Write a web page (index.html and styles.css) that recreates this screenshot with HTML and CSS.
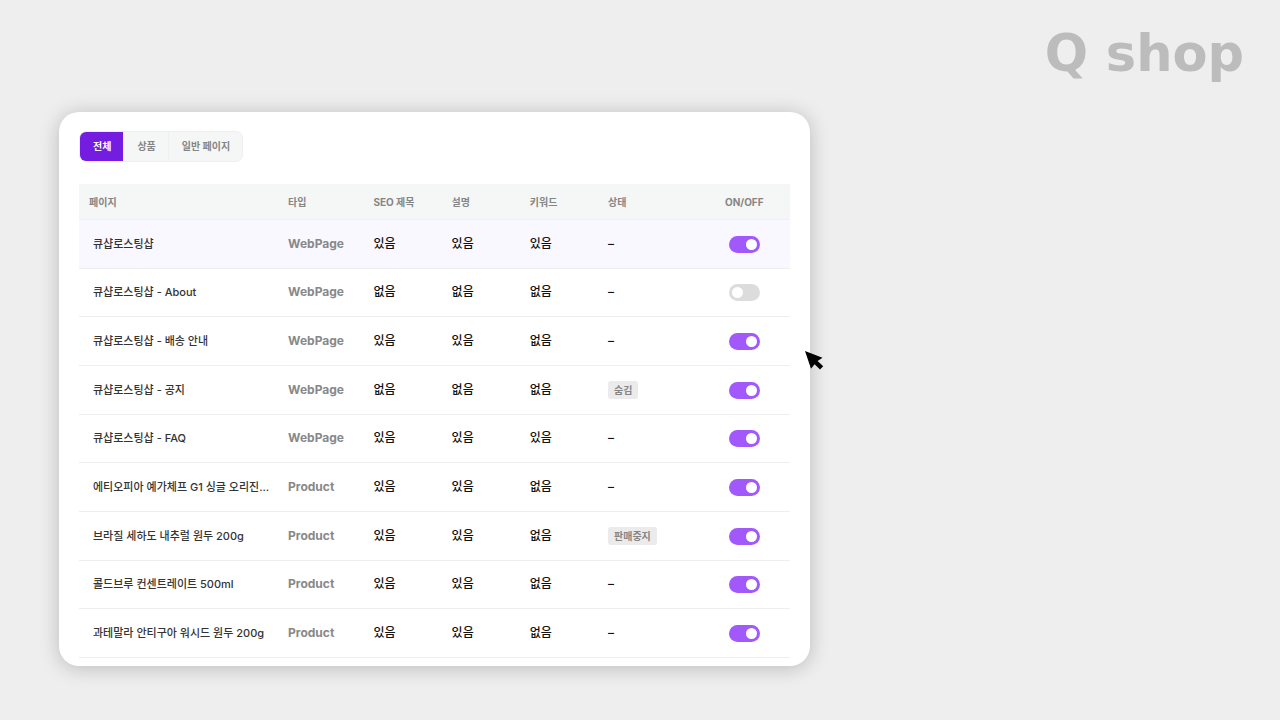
FILE: index.html
```html
<!DOCTYPE html>
<html lang="ko">
<head>
<meta charset="UTF-8">
<meta name="viewport" content="width=device-width, initial-scale=1">
<title>Q shop</title>
<link rel="stylesheet" href="styles.css">
</head>
<body>
<header class="top">
	<div class="logo">Q shop</div>
</header>
<main class="stage">
	<section class="card">
		<div class="tabs">
			<button type="button" class="tab active">전체</button>
			<button type="button" class="tab">상품</button>
			<button type="button" class="tab">일반 페이지</button>
		</div>
		<table class="pages">
			<colgroup>
				<col class="col-page"><col class="col-type"><col class="col-flag"><col class="col-flag"><col class="col-flag"><col class="col-status"><col class="col-switch">
			</colgroup>
			<thead>
				<tr>
					<th>페이지</th>
					<th>타입</th>
					<th>SEO 제목</th>
					<th>설명</th>
					<th>키워드</th>
					<th>상태</th>
					<th class="center">ON/OFF</th>
				</tr>
			</thead>
			<tbody>
				<tr class="selected">
					<td class="name">큐샵로스팅샵</td>
					<td class="type">WebPage</td>
					<td>있음</td>
					<td>있음</td>
					<td>있음</td>
					<td>–</td>
					<td class="center"><input type="checkbox" class="switch" aria-label="큐샵로스팅샵" checked></td>
				</tr>
				<tr>
					<td class="name">큐샵로스팅샵 - About</td>
					<td class="type">WebPage</td>
					<td>없음</td>
					<td>없음</td>
					<td>없음</td>
					<td>–</td>
					<td class="center"><input type="checkbox" class="switch" aria-label="큐샵로스팅샵 - About"></td>
				</tr>
				<tr>
					<td class="name">큐샵로스팅샵 - 배송 안내</td>
					<td class="type">WebPage</td>
					<td>있음</td>
					<td>있음</td>
					<td>없음</td>
					<td>–</td>
					<td class="center"><input type="checkbox" class="switch" aria-label="큐샵로스팅샵 - 배송 안내" checked></td>
				</tr>
				<tr>
					<td class="name">큐샵로스팅샵 - 공지</td>
					<td class="type">WebPage</td>
					<td>없음</td>
					<td>없음</td>
					<td>없음</td>
					<td><span class="badge">숨김</span></td>
					<td class="center"><input type="checkbox" class="switch" aria-label="큐샵로스팅샵 - 공지" checked></td>
				</tr>
				<tr>
					<td class="name">큐샵로스팅샵 - FAQ</td>
					<td class="type">WebPage</td>
					<td>있음</td>
					<td>있음</td>
					<td>있음</td>
					<td>–</td>
					<td class="center"><input type="checkbox" class="switch" aria-label="큐샵로스팅샵 - FAQ" checked></td>
				</tr>
				<tr>
					<td class="name">에티오피아 예가체프 G1 싱글 오리진...</td>
					<td class="type">Product</td>
					<td>있음</td>
					<td>있음</td>
					<td>없음</td>
					<td>–</td>
					<td class="center"><input type="checkbox" class="switch" aria-label="에티오피아 예가체프 G1 싱글 오리진" checked></td>
				</tr>
				<tr>
					<td class="name">브라질 세하도 내추럴 원두 200g</td>
					<td class="type">Product</td>
					<td>있음</td>
					<td>있음</td>
					<td>없음</td>
					<td><span class="badge">판매중지</span></td>
					<td class="center"><input type="checkbox" class="switch" aria-label="브라질 세하도 내추럴 원두 200g" checked></td>
				</tr>
				<tr>
					<td class="name">콜드브루 컨센트레이트 500ml</td>
					<td class="type">Product</td>
					<td>있음</td>
					<td>있음</td>
					<td>없음</td>
					<td>–</td>
					<td class="center"><input type="checkbox" class="switch" aria-label="콜드브루 컨센트레이트 500ml" checked></td>
				</tr>
				<tr>
					<td class="name">과테말라 안티구아 워시드 원두 200g</td>
					<td class="type">Product</td>
					<td>있음</td>
					<td>있음</td>
					<td>없음</td>
					<td>–</td>
					<td class="center"><input type="checkbox" class="switch" aria-label="과테말라 안티구아 워시드 원두 200g" checked></td>
				</tr>
			</tbody>
		</table>
		<svg class="cursor" width="19" height="20" viewBox="0 0 19 20" aria-hidden="true">
			<path d="M0 0 L17.5 6.8 L12.6 10 L18.2 15.2 L15 18.6 L9.6 13.2 L6 17.8 Z"/>
		</svg>
	</section>
</main>
</body>
</html>
```
FILE: styles.css
```css
* {
	box-sizing: border-box;
}

body {
	margin: 0;
	background: #eee;
	color: #111;
	font-family: Inter, "Noto Sans CJK KR", sans-serif;
	font-size: 12px;
	line-height: 16px;
}

.top {
	display: flex;
	justify-content: flex-end;
	padding: 24px 36px 28px;
}

.logo {
	color: #bcbcbc;
	font-family: "DejaVu Sans", sans-serif;
	font-size: 51px;
	font-weight: bold;
	line-height: 60px;
}

.stage {
	display: grid;
	grid-template-columns: 751fr 411fr;
	padding: 0 59px 54px;
}

.card {
	position: relative;
	padding: 19px 20px 8px;
	border-radius: 20px;
	background: #fff;
	box-shadow: 0 2px 20px rgba(0, 0, 0, .22);
}

/* tabs */
.tabs {
	display: inline-flex;
	border: 1px solid #eef0f0;
	border-radius: 7px;
	background: #f5f6f6;
	overflow: hidden;
	vertical-align: top;
}

.tab {
	height: 29px;
	padding: 0 12px 2px 13px;
	border: 0;
	border-left: 1px solid #eef0f0;
	background: none;
	color: #858585;
	font-family: inherit;
	font-size: 10px;
	font-weight: 700;
}

.tab.active {
	border-left: 0;
	background: #741ce0;
	color: #fff;
}

/* page list */
.pages {
	width: 100%;
	height: 474px;
	margin-top: 22px;
	border-collapse: separate;
	border-spacing: 0;
	table-layout: fixed;
}

.col-page { width: 28%; }
.col-type { width: 12%; }
.col-flag { width: 11%; }
.col-status { width: 14%; }
.col-switch { width: 13%; }

.pages th {
	height: 36px;
	padding: 0 10px;
	border-bottom: 1px solid #f0f0f2;
	background: #f5f6f6;
	color: #858585;
	font-size: 10px;
	font-weight: 700;
	text-align: left;
}

.pages td {
	height: 48px;
	padding: 0 10px;
	border-bottom: 1px solid #eee;
	font-weight: 500;
	white-space: nowrap;
}

.pages .name {
	padding: 0 0 0 14px;
	color: #333;
	font-size: 11px;
}

.pages .type {
	color: #888;
	font-weight: 700;
}

.pages .center {
	padding-left: 11px;
	text-align: center;
}

.selected td {
	background: #f9f7ff;
}

.badge {
	display: inline-block;
	padding: 1px 6px;
	border-radius: 3px;
	background: #ebebeb;
	color: #858585;
	font-size: 10px;
	font-weight: 700;
	vertical-align: middle;
}

.switch {
	appearance: none;
	display: inline-block;
	width: 31px;
	height: 17px;
	margin: 1px 0 0;
	padding: 3px;
	border-radius: 9px;
	background: #dcdcdc;
	vertical-align: middle;
}

.switch::before {
	content: "";
	display: block;
	width: 11px;
	height: 11px;
	border-radius: 50%;
	background: #fff;
}

.switch:checked {
	background: #a259fb;
}

.switch:checked::before {
	margin-left: auto;
}

.cursor {
	position: absolute;
	top: 239px;
	right: -14px;
}
```
